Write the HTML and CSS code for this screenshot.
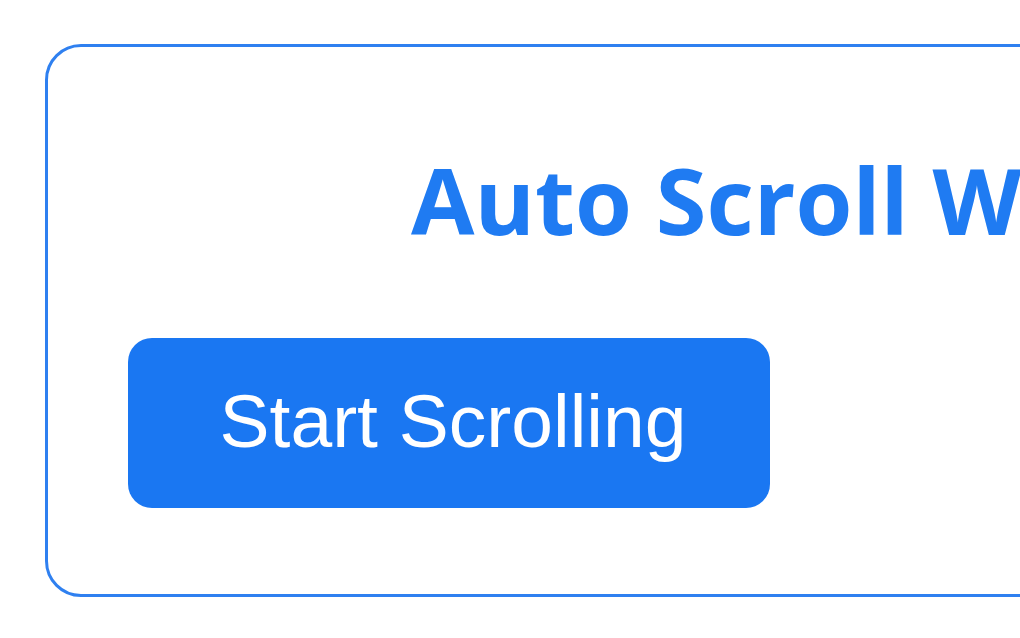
FILE: index.html
```html
<!DOCTYPE html>
<html>
<head>
<meta charset="utf-8">
<link rel="stylesheet" href="styles.css">
</head>
<body>
<div class="card">
  <h1 class="title">Auto Scroll Widget</h1>
  <button class="btn">Start Scrolling</button>
</div>
</body>
</html>
```
FILE: styles.css
```css
html, body {
  margin: 0;
  padding: 0;
  background: #ffffff;
  overflow: hidden;
}
body {
  padding: 44px 0 0 45px;
}
.card {
  width: 1400px;
  box-sizing: border-box;
  border: 3px solid #2f80f0;
  border-radius: 36px;
  padding: 0 0 86px 80px;
}
.title {
  margin: 0;
  padding: 93px 0 0 283px;
  font-family: "Open Sans", "Liberation Sans", sans-serif;
  font-weight: 700;
  font-size: 92px;
  line-height: 120px;
  color: #1f7bf2;
  white-space: nowrap;
}
.btn {
  display: block;
  margin-top: 78px;
  width: 642px;
  height: 170px;
  border: none;
  border-radius: 24px;
  background: #1a77f2;
  color: #ffffff;
  font-family: "Liberation Sans", Arial, sans-serif;
  font-size: 75px;
  padding: 0 0 4px 8px;
  cursor: pointer;
}
```
